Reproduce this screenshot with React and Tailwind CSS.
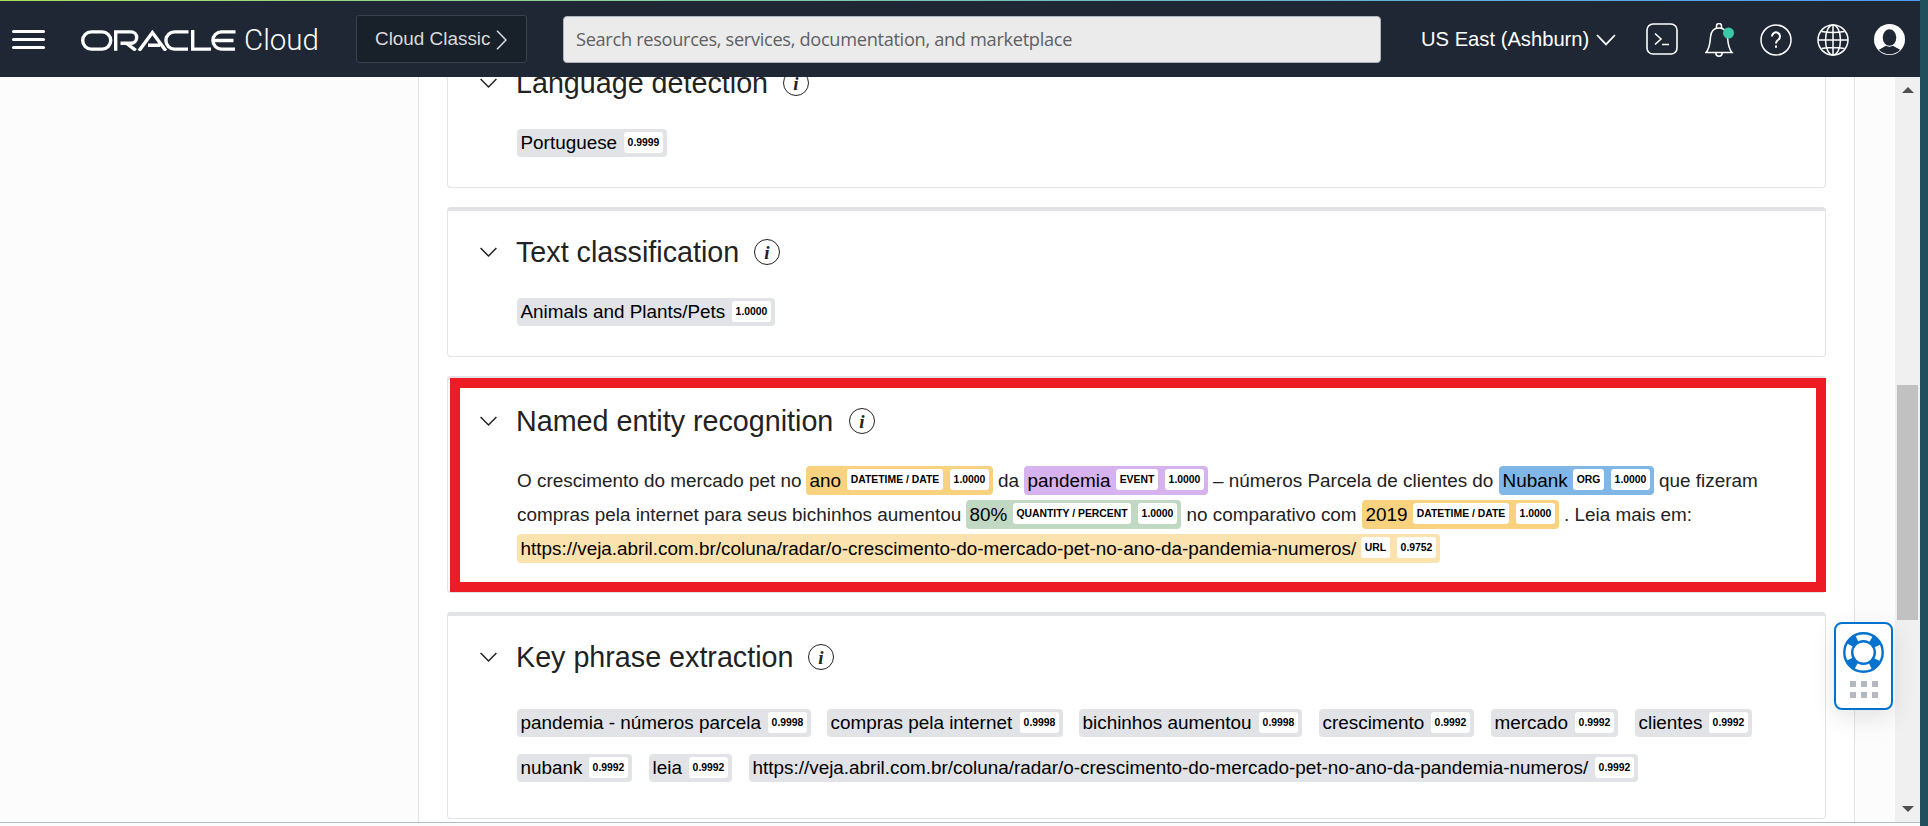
const SANS = "font-['Liberation_Sans',Arial,sans-serif]";

function Chevron() {
  return (
    <svg className="ml-8 h-[11px] w-[17px] shrink-0" viewBox="0 0 17 11" fill="none" stroke="#222" strokeWidth="1.500">
      <path d="M.6 1 8.500 9 16.400 1" />
    </svg>
  );
}

function Info() {
  return (
    <span className="flex size-[26px] shrink-0 items-center justify-center rounded-full border-[1.5px] border-[#222] font-['Liberation_Serif',serif] text-[19px] leading-none font-bold text-[#222] italic">
      i
    </span>
  );
}

function Card({ title, titleWidth, height, children }) {
  return (
    <section className={`mb-[19px] shrink-0 rounded-[4px] border border-t-4 border-[#e1e3e7] bg-white ${height}`}>
      <header className="mt-[25px] flex h-[32px] items-center">
        <Chevron />
        <h2 className={`ml-[19px] text-[28.7px] leading-[32px] whitespace-nowrap text-[#222] ${titleWidth}`}>{title}</h2>
        <Info />
      </header>
      {children}
    </section>
  );
}

function Badge({ children, width }) {
  return (
    <span className={`flex h-[21px] items-center justify-center rounded-[3px] bg-white pt-[2px] text-[10.4px] leading-none font-bold whitespace-nowrap text-black ${width}`}>
      {children}
    </span>
  );
}

function Phrase({ text, score, width }) {
  return (
    <span className={`flex h-[28px] items-center justify-between rounded-[4px] bg-[#e1e3e7] pr-1 pl-[3.5px] text-black ${width}`}>
      <span className="whitespace-nowrap">{text}</span>
      <span className="-mt-[1px]"><Badge width="w-[39px]">{score}</Badge></span>
    </span>
  );
}

function Entity({ text, label, score, width, labelWidth, color }) {
  return (
    <span className={`flex h-[29px] shrink-0 items-center rounded-[4px] pr-1 pl-[3.5px] text-black ${width} ${color}`}>
      <span className="whitespace-nowrap">{text}</span>
      <span className="-mt-[2px] ml-auto flex gap-[7px]">
        <Badge width={labelWidth}>{label}</Badge>
        <Badge width="w-[39px]">{score}</Badge>
      </span>
    </span>
  );
}

function Words({ children, width }) {
  return <span className={`shrink-0 whitespace-nowrap ${width}`}>{children}</span>;
}

function Header() {
  return (
    <div className="flex h-[76px] items-center bg-[#1e2733] text-white">
      <div className="ml-3 flex w-[33px] flex-col gap-[5px]">
        <i className="h-[3px] rounded bg-white" />
        <i className="h-[3px] rounded bg-white" />
        <i className="h-[3px] rounded bg-white" />
      </div>
      <svg className="mt-[2px] ml-9 h-[21px] w-[155px] shrink-0" viewBox="0 0 155 21" fill="none" stroke="#fff" strokeWidth="3.4">
        <rect x="1.7" y="1.9" width="28" height="17.2" rx="8.6" />
        <path d="M34.7 20.8V1.9H50a5.6 5.6 0 0 1 0 11.4H39.5M45 13 54.8 20.4" />
        <path d="M58 20.8 71.4 2.6 84.8 20.8M67 15.2H79" />
        <path d="M107.5 1.9H93.5a8.6 8.6 0 0 0 0 17.2H107M111.7 0V19.1H130" />
        <path d="M154.5 1.9H140.5a8.6 8.6 0 0 0 0 17.2H154M132.5 10.5H152.5" />
      </svg>
      <span className="mt-px ml-2 w-[76px] font-['Roboto',sans-serif] text-[29.5px] leading-[30px] font-light">Cloud</span>
      <button className="ml-[36px] flex h-[48px] w-[171px] items-center rounded-[3px] border border-[#38414c] bg-[#18202a] pl-[18px] text-[18.9px] text-[#d8dadd]">
        <span className="whitespace-nowrap">Cloud Classic</span>
        <svg className="mt-[2px] ml-[6px] h-[20px] w-[11px]" viewBox="0 0 11 20" fill="none" stroke="#d8dadd" strokeWidth="1.6"><path d="M1 .7 10 10 1 19.3" /></svg>
      </button>
      <div className="mt-px ml-9 flex h-[47px] w-[818px] items-center rounded-[4px] border border-[#aeb5be] bg-[#ebebeb] pt-px pl-3 font-['Open_Sans',sans-serif] text-[18.2px] tracking-[-0.31px] text-[#5e6063]">
        <span className="whitespace-nowrap">Search resources, services, documentation, and marketplace</span>
      </div>
      <span className="ml-10 w-[170px] text-[20.2px] whitespace-nowrap">US East (Ashburn)</span>
      <svg className="mt-[2px] ml-[5px] h-[12px] w-[20px]" viewBox="0 0 20 12" fill="none" stroke="#fff" strokeWidth="1.8"><path d="M1 1 10 10.4 19 1" /></svg>
      <svg className="ml-[30px] size-[32px]" viewBox="0 0 32 32" fill="none" stroke="#fff" strokeWidth="1.6">
        <rect x="1" y="1" width="30" height="30" rx="6" />
        <path d="M9 10.500 15 16 9 21.500M16 21.500H23" />
      </svg>
      <svg className="mt-[2px] ml-[27px] h-[34px] w-[30px]" viewBox="0 0 30 34" fill="none" stroke="#fff" strokeWidth="1.5">
        <path d="M1 29.500C5 25 5 20 5.500 14 6 8.500 9 5 14 5s8 3.500 8.500 9C23 20 23 25 27 29.500ZM11.500 5.500V3a2.500 2.500 0 0 1 5 0V5.500M10.800 30a3.200 3.200 0 0 0 6.400 0" />
        <circle cx="23.500" cy="10" r="5.500" fill="#3cc8a8" stroke="none" />
      </svg>
      <svg className="mt-px ml-[25px] size-[32px]" viewBox="0 0 32 32" fill="none" stroke="#fff" strokeWidth="1.500">
        <circle cx="16" cy="16" r="15" />
        <path d="M12 12.500a4 4 0 1 1 6.500 3C17 16.500 16 17.300 16 19.500M16 21.500v2.200" strokeWidth="2" />
      </svg>
      <svg className="mt-[2px] ml-[25px] size-[32px]" viewBox="0 0 32 32" fill="none" stroke="#fff" strokeWidth="1.500">
        <circle cx="16" cy="16" r="15" />
        <ellipse cx="16" cy="16" rx="7.500" ry="15" />
        <path d="M16 1v30M1 16h30M4.500 7.500Q16 9.500 27.500 7.500M4.500 24.500Q16 22.500 27.500 24.500" />
      </svg>
      <svg className="mt-px ml-[25px] size-[31px]" viewBox="0 0 32 32">
        <circle cx="16" cy="16" r="16" fill="#fff" />
        <ellipse cx="16" cy="14" rx="7" ry="8.500" fill="#1e2733" />
        <path d="M5 26.500 12.500 22.500Q16 24.500 19.500 22.500L27 26.500A15 15 0 0 1 5 26.500Z" fill="#1e2733" />
      </svg>
    </div>
  );
}

function Help() {
  return (
    <div className="absolute top-[622px] left-[1834px] flex h-[88px] w-[59px] flex-col items-center rounded-[8px] border-2 border-[#0572ce] bg-white pt-2 shadow-[0_8px_24px_rgba(0,0,0,0.1)]">
      <svg className="size-[41px]" viewBox="0 0 41 41" fill="none" stroke="#0572ce">
        <circle cx="20.500" cy="20.500" r="15.500" strokeWidth="9" strokeDasharray="9.500 14.847" strokeDashoffset="-7.500" />
        <circle cx="20.500" cy="20.500" r="19.200" strokeWidth="2.400" />
        <circle cx="20.500" cy="20.500" r="11.300" strokeWidth="2.400" />
      </svg>
      <div className="mt-2 grid grid-cols-3 gap-x-[5px] gap-y-[5px]">
        {[0, 1, 2, 3, 4, 5].map((n) => <i key={n} className="size-[6px] bg-[#b4b9c0]" />)}
      </div>
    </div>
  );
}

export default function App() {
  return (
    <div className={`relative flex h-[826px] w-[1928px] overflow-hidden bg-[#21505c] ${SANS}`}>
      <div className="flex h-full w-[1920px] flex-col bg-[#fcfcfc]">
        <div className="h-px shrink-0 bg-linear-to-r from-[#a8e05a] to-[#4c9cf5]" />
        <Header />
        <div className="flex h-[745px] shrink-0 overflow-hidden">
          <aside className="w-[418px] shrink-0" />
          <main className="flex w-[1437px] shrink-0 flex-col border-x border-[#e1e3e7] bg-white px-7 text-[18.9px]">
            <div className="-mt-[39px] flex flex-col">
              <Card title="Language detection" titleWidth="w-[267px]" height="h-[150px]">
                <div className="mt-[30px] ml-[69px] flex"><Phrase text="Portuguese" score="0.9999" width="w-[150px]" /></div>
              </Card>
              <Card title="Text classification" titleWidth="w-[238px]" height="h-[150px]">
                <div className="mt-[30px] ml-[69px] flex"><Phrase text="Animals and Plants/Pets" score="1.0000" width="w-[258px]" /></div>
              </Card>
              <Card title="Named entity recognition" titleWidth="w-[333px]" height="h-[217px]">
                <div className="mt-[29px] ml-[69px] flex flex-col gap-[5px] leading-[29px] text-[#222]">
                  <p className="flex">
                    <Words width="w-[289px]">O crescimento do mercado pet no</Words>
                    <Entity text="ano" label="DATETIME / DATE" score="1.0000" width="w-[187px]" labelWidth="w-[96px]" color="bg-[#f9d27f]" />
                    <Words width="w-[31px] pl-[5px]">da</Words>
                    <Entity text="pandemia" label="EVENT" score="1.0000" width="w-[184px]" labelWidth="w-[42px]" color="bg-[#d6b2ef]" />
                    <Words width="w-[291px] pl-[5px]">– números Parcela de clientes do</Words>
                    <Entity text="Nubank" label="ORG" score="1.0000" width="w-[155px]" labelWidth="w-[31px]" color="bg-[#81b7e6]" />
                    <Words width="pl-[5px]">que fizeram</Words>
                  </p>
                  <p className="flex">
                    <Words width="w-[449px]">compras pela internet para seus bichinhos aumentou</Words>
                    <Entity text="80%" label="QUANTITY / PERCENT" score="1.0000" width="w-[215px]" labelWidth="w-[118px]" color="bg-[#c1d9c3]" />
                    <Words width="w-[181px] pl-[5.5px]">no comparativo com</Words>
                    <Entity text="2019" label="DATETIME / DATE" score="1.0000" width="w-[197px]" labelWidth="w-[96px]" color="bg-[#f9d27f]" />
                    <Words width="pl-[5px]">. Leia mais em:</Words>
                  </p>
                  <p className="flex">
                    <Entity text="https://veja.abril.com.br/coluna/radar/o-crescimento-do-mercado-pet-no-ano-da-pandemia-numeros/" label="URL" score="0.9752" width="w-[923px]" labelWidth="w-[29px]" color="bg-[#fce2af]" />
                  </p>
                </div>
              </Card>
              <Card title="Key phrase extraction" titleWidth="w-[292px]" height="h-[207px]">
                <div className="mt-[36px] ml-[69px] flex flex-col gap-[17px]">
                  <div className="flex gap-[16px]">
                    <Phrase text="pandemia - números parcela" score="0.9998" width="w-[294px]" />
                    <Phrase text="compras pela internet" score="0.9998" width="w-[236px]" />
                    <Phrase text="bichinhos aumentou" score="0.9998" width="w-[223px] mr-px" />
                    <Phrase text="crescimento" score="0.9992" width="w-[155px] mr-px" />
                    <Phrase text="mercado" score="0.9992" width="w-[127px] mr-px" />
                    <Phrase text="clientes" score="0.9992" width="w-[117px]" />
                  </div>
                  <div className="flex gap-[17px]">
                    <Phrase text="nubank" score="0.9992" width="w-[115px]" />
                    <Phrase text="leia" score="0.9992" width="w-[83px]" />
                    <Phrase text="https://veja.abril.com.br/coluna/radar/o-crescimento-do-mercado-pet-no-ano-da-pandemia-numeros/" score="0.9992" width="w-[889px]" />
                  </div>
                </div>
              </Card>
            </div>
          </main>
          <div className="w-10 shrink-0" />
          <div className="flex w-[25px] shrink-0 flex-col items-center bg-[#f0f0f0] pt-[10px]">
            <i className="border-x-[6px] border-b-[6px] border-x-transparent border-b-[#505050]" />
            <div className="mt-[292px] h-[235px] w-[21px] bg-[#c1c1c1]" />
            <i className="mt-auto mb-[10px] border-x-[6px] border-t-[6px] border-x-transparent border-t-[#505050]" />
          </div>
        </div>
        <div className="h-px shrink-0 bg-[#b4bcc4]" />
      </div>
      <div className="absolute top-[378px] left-[450px] h-[214px] w-[1376px] border-10 border-[#ed1c24]" />
      <Help />
    </div>
  );
}
